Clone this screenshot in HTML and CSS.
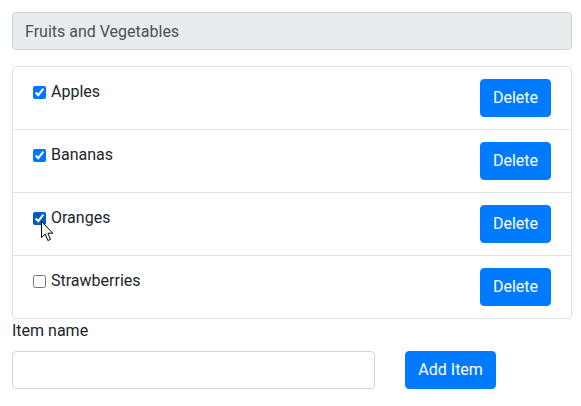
FILE: index.html
```html
<!DOCTYPE html>
<html>
<head>
<meta charset="utf-8">
<link rel="stylesheet" href="styles.css">
</head>
<body>
<div class="container">
  <div class="title-box">Fruits and Vegetables</div>
  <ul class="list">
    <li class="item">
      <label class="check"><input type="checkbox" checked> Apples</label>
      <button class="btn">Delete</button>
    </li>
    <li class="item">
      <label class="check"><input type="checkbox" checked> Bananas</label>
      <button class="btn">Delete</button>
    </li>
    <li class="item">
      <label class="check"><span class="cb-wrap"><input type="checkbox" class="hovered" checked><svg class="cursor" width="13" height="21" viewBox="0 0 13 21"><path d="M0.5 0.5 L0.5 16.5 L4.2 13 L6.8 19.5 L9.4 18.4 L6.9 12.2 L11.8 12.2 Z" fill="#fff" stroke="#000" stroke-width="1" stroke-linejoin="round"/></svg></span> Oranges</label>
      <button class="btn">Delete</button>
    </li>
    <li class="item">
      <label class="check"><input type="checkbox"> Strawberries</label>
      <button class="btn">Delete</button>
    </li>
  </ul>
  <label class="field-label" for="name">Item name</label>
  <div class="row">
    <div class="col-8"><input id="name" class="input" type="text"></div>
    <div class="col-4"><button class="btn">Add Item</button></div>
  </div>
</div>
</body>
</html>
```
FILE: styles.css
```css
* { box-sizing: border-box; }
body {
  margin: 0;
  font-family: "Segoe UI", Roboto, "Noto Sans", sans-serif;
  font-size: 16px;
  line-height: 24px;
  color: #212529;
  background: #fff;
}
.container {
  width: 560px;
  margin: 12px 0 0 12px;
}
.title-box {
  background: #e9ecef;
  border: 1px solid #ced4da;
  border-radius: 4px;
  color: #495057;
  padding: 7px 12px 5px;
  font-size: 16px;
  margin-bottom: 16px;
}
.list {
  list-style: none;
  margin: 0;
  padding: 0;
  border: 1px solid #dee2e6;
  border-radius: 4px;
}
.item {
  display: flex;
  justify-content: space-between;
  align-items: flex-start;
  padding: 12px 20px;
  border-top: 1px solid #dee2e6;
}
.item:first-child { border-top: none; }
.check {
  display: flex;
  align-items: center;
  gap: 5px;
  padding-top: 1px;
}
.check input {
  width: 13px;
  height: 13px;
  margin: 0;
}
.cb-wrap {
  position: relative;
  display: inline-flex;
}
.hovered { accent-color: #005cc8; }
.cursor {
  position: absolute;
  left: 8px;
  top: 9px;
}
.btn {
  font-family: inherit;
  font-size: 16px;
  line-height: 24px;
  color: #fff;
  background: #007bff;
  border: 1px solid #007bff;
  border-radius: 4px;
  padding: 6px 12px;
}
.field-label {
  display: block;
  margin-bottom: 8px;
}
.row {
  display: flex;
  margin: 0 -15px;
}
.col-8 { width: 66.6667%; padding: 0 15px; }
.col-4 { width: 33.3333%; padding: 0 15px; }
.input {
  display: block;
  width: 100%;
  height: 38px;
  border: 1px solid #ced4da;
  border-radius: 4px;
  padding: 6px 12px;
  font-family: inherit;
  font-size: 16px;
}
```
